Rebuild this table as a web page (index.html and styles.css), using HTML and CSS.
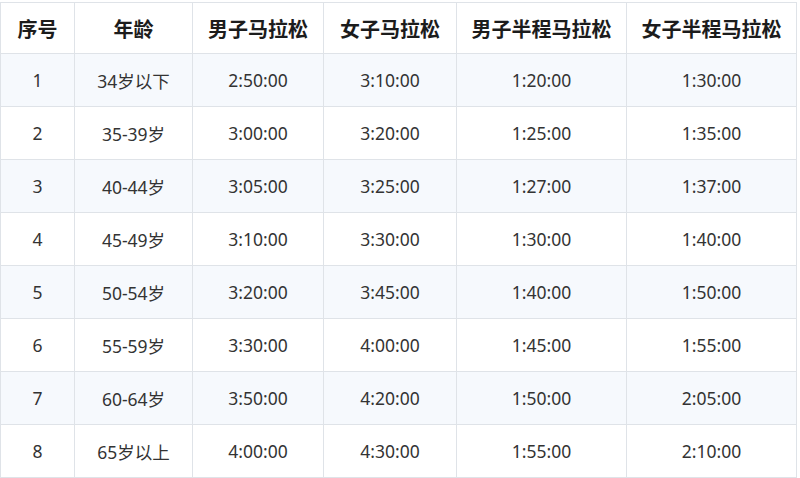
FILE: index.html
```html
<!DOCTYPE html>
<html lang="zh">
<head>
<meta charset="utf-8">
<link rel="stylesheet" href="styles.css">
</head>
<body>
<table class="grid">
  <colgroup>
    <col class="c1"><col class="c2"><col class="c3"><col class="c4"><col class="c5"><col class="c6">
  </colgroup>
  <thead>
    <tr><th>序号</th><th>年龄</th><th>男子马拉松</th><th>女子马拉松</th><th>男子半程马拉松</th><th>女子半程马拉松</th></tr>
  </thead>
  <tbody>
    <tr><td>1</td><td>34岁以下</td><td>2:50:00</td><td>3:10:00</td><td>1:20:00</td><td>1:30:00</td></tr>
    <tr><td>2</td><td>35-39岁</td><td>3:00:00</td><td>3:20:00</td><td>1:25:00</td><td>1:35:00</td></tr>
    <tr><td>3</td><td>40-44岁</td><td>3:05:00</td><td>3:25:00</td><td>1:27:00</td><td>1:37:00</td></tr>
    <tr><td>4</td><td>45-49岁</td><td>3:10:00</td><td>3:30:00</td><td>1:30:00</td><td>1:40:00</td></tr>
    <tr><td>5</td><td>50-54岁</td><td>3:20:00</td><td>3:45:00</td><td>1:40:00</td><td>1:50:00</td></tr>
    <tr><td>6</td><td>55-59岁</td><td>3:30:00</td><td>4:00:00</td><td>1:45:00</td><td>1:55:00</td></tr>
    <tr><td>7</td><td>60-64岁</td><td>3:50:00</td><td>4:20:00</td><td>1:50:00</td><td>2:05:00</td></tr>
    <tr><td>8</td><td>65岁以上</td><td>4:00:00</td><td>4:30:00</td><td>1:55:00</td><td>2:10:00</td></tr>
  </tbody>
</table>
</body>
</html>
```
FILE: styles.css
```css
html, body {
  margin: 0;
  padding: 0;
  background: #ffffff;
}
body {
  padding-top: 2px;
  font-family: "Noto Sans", "Noto Sans CJK SC", sans-serif;
}
.grid {
  border-collapse: collapse;
  table-layout: fixed;
  width: 796px;
  border: 1px solid #dfe3e8;
}
.c1 { width: 74px; }
.c2 { width: 118px; }
.c3 { width: 131px; }
.c4 { width: 133px; }
.c5 { width: 170px; }
.c6 { width: 170px; }
.grid th, .grid td {
  border: 1px solid #dfe3e8;
  text-align: center;
  vertical-align: middle;
  padding: 0;
}
.grid th {
  height: 50px;
  font-size: 20px;
  font-weight: 700;
  color: #1c1c1c;
  background: #ffffff;
}
.grid td {
  height: 52px;
  font-size: 17.5px;
  color: #333333;
}
.grid tbody tr:nth-child(odd) td {
  background: #f6f9fd;
}
```
